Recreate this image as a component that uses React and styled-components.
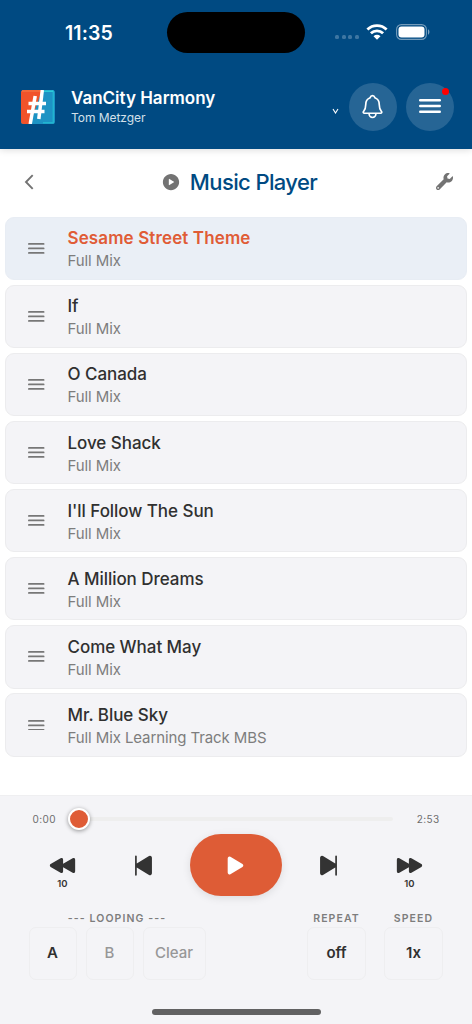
import React from 'react';
import styled, { createGlobalStyle } from 'styled-components';
import {
  IoNotificationsOutline,
  IoPlayCircle,
  IoPlayBack,
  IoPlayForward,
  IoPlaySkipBack,
  IoPlaySkipForward,
  IoPlay,
} from 'react-icons/io5';
import { FaWrench } from 'react-icons/fa';

const tracks = [
  { title: 'Sesame Street Theme', part: 'Full Mix' },
  { title: 'If', part: 'Full Mix' },
  { title: 'O Canada', part: 'Full Mix' },
  { title: 'Love Shack', part: 'Full Mix' },
  { title: "I'll Follow The Sun", part: 'Full Mix' },
  { title: 'A Million Dreams', part: 'Full Mix' },
  { title: 'Come What May', part: 'Full Mix' },
  { title: 'Mr. Blue Sky', part: 'Full Mix Learning Track MBS' },
];

const Bars = ({ width, gap, weight }) => (
  <svg width={width} height={gap * 2 + weight} fill="none" stroke="currentColor" strokeWidth={weight} strokeLinecap="round">
    {[0, 1, 2].map((i) => (
      <path key={i} d={`M${weight / 2} ${weight / 2 + gap * i}H${width - weight / 2}`} />
    ))}
  </svg>
);

const Wifi = () => (
  <svg width="22" height="16" viewBox="0 0 22 16" fill="none" stroke="#fff" strokeWidth="2.8">
    <path d="M1.4 5.6a13.8 13.8 0 0 1 19.2 0" />
    <path d="M4.9 9.3a8.8 8.8 0 0 1 12.2 0" />
    <path d="M7.5 12.2a5 5 0 0 1 7 0L11 15.7z" fill="#fff" stroke="none" />
  </svg>
);

const Battery = () => (
  <svg width="34" height="16" viewBox="0 0 34 16" fill="none">
    <rect x=".6" y=".6" width="29.8" height="14.8" rx="4.8" stroke="#fff" strokeOpacity=".45" strokeWidth="1.1" />
    <rect x="2.5" y="2.5" width="26" height="11" rx="3" fill="#fff" />
    <path d="M32 5.3c1.9.8 1.9 4.6 0 5.4z" fill="#fff" fillOpacity=".5" />
  </svg>
);

const Logo = () => (
  <svg width="34" height="34" viewBox="0 0 34 34">
    <rect width="34" height="34" rx="2.5" fill="#1d93c4" />
    <path d="M31 1.2h1.3v31.6H22" fill="none" stroke="#21b5cf" strokeWidth="1.4" />
    <path d="M21 1.2h11" stroke="#2ccbd8" strokeWidth="1.6" />
    <path d="M2.5 0H21L9 34H2.5A2.5 2.5 0 0 1 0 31.5v-29A2.5 2.5 0 0 1 2.5 0z" fill="#f1532a" />
    <path d="M1 1h18.5" stroke="#f47a45" strokeWidth="1.2" />
    <g fill="none" stroke="#fff" strokeWidth="3.5">
      <path d="M14.2 6L9.2 34" />
      <path d="M21.3 0L17.8 29" />
      <path d="M7.5 13.5H25M6 21.5H23.5" />
    </g>
  </svg>
);

function App() {
  return (
    <>
      <GlobalStyle />
      <Screen>
        <Header>
          <StatusBar>
            <Clock>11:35</Clock>
            <Island />
            <Status>
              <Signal><i /><i /><i /><i /></Signal>
              <Wifi />
              <Battery />
            </Status>
          </StatusBar>
          <Account>
            <Logo />
            <Names>
              <Group>VanCity Harmony</Group>
              <Member>Tom Metzger</Member>
            </Names>
            <Caret viewBox="0 0 7 6"><path d="M1 1l2.5 4L6 1" /></Caret>
            <RoundButton><IoNotificationsOutline size={27} /></RoundButton>
            <RoundButton>
              <Bars width={22} gap={5.8} weight={2.5} />
              <Badge />
            </RoundButton>
          </Account>
        </Header>

        <TitleBar>
          <svg width="10" height="16" viewBox="0 0 10 16" fill="none" stroke="currentColor" strokeWidth="1.9">
            <path d="M8.7 1.2L2 8l6.7 6.8" />
          </svg>
          <Title><IoPlayCircle size={20} /><h1>Music Player</h1></Title>
          <FaWrench size={17} />
        </TitleBar>

        <TrackList>
          {tracks.map((track, index) => (
            <Track key={track.title} $active={index === 0}>
              <Bars width={16.5} gap={4.5} weight={1.8} />
              <div>
                <TrackTitle $active={index === 0}>{track.title}</TrackTitle>
                <TrackPart>{track.part}</TrackPart>
              </div>
            </Track>
          ))}
        </TrackList>

        <Player>
          <Progress>
            <Time>0:00</Time>
            <Slider><Thumb /></Slider>
            <Time>2:53</Time>
          </Progress>
          <Controls>
            <Control><IoPlayBack size={27} /><small>10</small></Control>
            <Control><IoPlaySkipBack size={27} /></Control>
            <PlayButton><IoPlay size={25} /></PlayButton>
            <Control><IoPlaySkipForward size={27} /></Control>
            <Control><IoPlayForward size={27} /><small>10</small></Control>
          </Controls>
          <Options>
            <OptionGroup>
              <Label>--- LOOPING ---</Label>
              <Buttons>
                <OptionButton $width={48}>A</OptionButton>
                <OptionButton $width={48} $muted>B</OptionButton>
                <OptionButton $width={63} $muted>Clear</OptionButton>
              </Buttons>
            </OptionGroup>
            <Buttons $gap={18}>
              <OptionGroup>
                <Label>REPEAT</Label>
                <OptionButton $width={59}>off</OptionButton>
              </OptionGroup>
              <OptionGroup>
                <Label>SPEED</Label>
                <OptionButton $width={59}>1x</OptionButton>
              </OptionGroup>
            </Buttons>
          </Options>
          <HomeBar />
        </Player>
      </Screen>
    </>
  );
}

const GlobalStyle = createGlobalStyle`
  * {
    box-sizing: border-box;
  }
  body {
    margin: 0;
    background: #fff;
    font-family: Inter, "Liberation Sans", sans-serif;
  }
  h1 {
    margin: 0;
  }
  svg {
    display: block;
    flex: none;
  }
  button {
    font-family: inherit;
    padding: 0;
    border: 0;
  }
`;
const Screen = styled.main`
  display: flex;
  flex-direction: column;
  width: 472px;
  height: 1024px;
  overflow: hidden;
`;
const Header = styled.header`
  height: 148.5px;
  flex: none;
  background: #004a82;
  color: #fff;
  box-shadow: 0 1px 7px rgba(0, 0, 0, 0.14);
`;
const StatusBar = styled.div`
  display: grid;
  grid-template-columns: 167px 138px 1fr;
  align-items: center;
  height: 65px;
`;
const Clock = styled.div`
  padding-left: 65px;
  font-size: 19.5px;
  font-weight: 600;
  letter-spacing: 0.1px;
`;
const Island = styled.div`
  height: 40.5px;
  border-radius: 21px;
  background: #000;
`;
const Status = styled.div`
  display: flex;
  align-items: center;
  margin-top: -2px;
  padding-left: 30px;
  svg + svg {
    margin-left: 7.5px;
  }
`;
const Signal = styled.div`
  display: flex;
  gap: 2.5px;
  margin: 11px 7.5px 0 0;
  i {
    width: 4px;
    height: 4px;
    border-radius: 1.5px;
    background: #3d76a2;
  }
`;
const Account = styled.div`
  display: flex;
  align-items: center;
  height: 83px;
  padding: 0 18px 0 21px;
`;
const Names = styled.div`
  flex: 1;
  padding-left: 16px;
`;
const Group = styled.div`
  font-size: 17px;
  line-height: 22px;
  font-weight: 600;
`;
const Member = styled.div`
  font-size: 12px;
  line-height: 18px;
  letter-spacing: -0.05px;
  color: #d3e0ea;
`;
const Caret = styled.svg`
  width: 7px;
  height: 6px;
  margin: 8px 10px 0 0;
  fill: none;
  stroke: #fff;
  stroke-width: 1.1;
`;
const RoundButton = styled.button`
  position: relative;
  display: flex;
  align-items: center;
  justify-content: center;
  width: 48px;
  height: 48px;
  padding-right: 1px;
  border-radius: 50%;
  background: #266595;
  color: #fff;
  & + & {
    margin-left: 9px;
  }
`;
const Badge = styled.span`
  position: absolute;
  top: 5px;
  right: 5px;
  width: 7.5px;
  height: 7.5px;
  border-radius: 50%;
  background: #f00;
`;
const TitleBar = styled.div`
  display: flex;
  align-items: center;
  justify-content: space-between;
  height: 67.5px;
  padding: 0 19px 1px 24px;
  color: #737373;
`;
const Title = styled.div`
  display: flex;
  align-items: center;
  gap: 9px;
  padding-left: 8px;
  h1 {
    color: #004a82;
    font-size: 22px;
    line-height: 28px;
    font-weight: 500;
    letter-spacing: -0.62px;
  }
`;
const TrackList = styled.div`
  display: flex;
  flex-direction: column;
  gap: 4.6px;
  height: 579px;
  flex: none;
  padding: 0.5px 5px 0;
`;
const Track = styled.div`
  display: flex;
  align-items: center;
  gap: 23px;
  height: 63.5px;
  flex: none;
  padding-left: 22px;
  border: 1px solid ${(p) => (p.$active ? '#e8edf4' : '#ececee')};
  border-radius: 9px;
  background: ${(p) => (p.$active ? '#eaeff6' : '#f4f4f7')};
  color: #777;
`;
const TrackTitle = styled.div`
  padding-top: 3px;
  font-size: 17px;
  line-height: 23px;
  font-weight: ${(p) => (p.$active ? 600 : 500)};
  letter-spacing: ${(p) => (p.$active ? 0.12 : -0.05)}px;
  color: ${(p) => (p.$active ? '#e05c36' : '#303030')};
`;
const TrackPart = styled.div`
  font-size: 15px;
  line-height: 22px;
  letter-spacing: -0.1px;
  color: #7d7d7d;
`;
const Player = styled.section`
  display: flex;
  flex-direction: column;
  height: 229px;
  flex: none;
  border-top: 1px solid #efeff1;
  background: #f4f4f7;
`;
const Progress = styled.div`
  display: flex;
  align-items: center;
  justify-content: space-between;
  height: 38px;
  padding: 8.5px 32.5px 0;
`;
const Time = styled.span`
  font-size: 10px;
  letter-spacing: 0.4px;
  color: #6d6d6d;
`;
const Slider = styled.div`
  display: flex;
  align-items: center;
  width: 325px;
  height: 4px;
  margin-right: 12px;
  border-radius: 2px;
  background: #eee;
`;
const Thumb = styled.div`
  flex: none;
  width: 22px;
  height: 22px;
  border: 2px solid #fff;
  border-radius: 50%;
  background: #df5c36;
  box-shadow: 0 1px 4px rgba(0, 0, 0, 0.4);
`;
const Controls = styled.div`
  display: grid;
  grid-template-columns: 67px 94px 92px 93px 69px;
  padding-left: 29px;
  align-items: center;
  height: 62px;
`;
const Control = styled.button`
  position: relative;
  display: flex;
  align-items: center;
  justify-content: center;
  height: 62px;
  background: none;
  color: #333;
  small {
    position: absolute;
    top: 43px;
    font-size: 9.5px;
    line-height: 13px;
    font-weight: 600;
  }
`;
const PlayButton = styled.button`
  display: flex;
  align-items: center;
  justify-content: center;
  height: 62px;
  padding-right: 1px;
  border-radius: 31px;
  background: #de5c36;
  color: #fff;
  box-shadow: 0 2px 9px rgba(0, 0, 0, 0.1);
`;
const Options = styled.div`
  display: flex;
  justify-content: space-between;
  padding: 16px 29px 0 28.5px;
`;
const OptionGroup = styled.div`
  display: flex;
  flex-direction: column;
  align-items: center;
`;
const Label = styled.div`
  height: 15px;
  font-size: 10.5px;
  line-height: 14px;
  font-weight: 600;
  letter-spacing: 1.1px;
  color: #7d7d7d;
`;
const Buttons = styled.div`
  display: flex;
  gap: ${(p) => p.$gap || 9}px;
`;
const OptionButton = styled.button`
  width: ${(p) => p.$width}px;
  height: 52.5px;
  padding-bottom: 2px;
  border: 1px solid #eeeef0;
  border-radius: 7px;
  background: transparent;
  color: ${(p) => (p.$muted ? '#979797' : '#303030')};
  font-size: 15px;
  font-weight: ${(p) => (p.$muted ? 500 : 600)};
`;
const HomeBar = styled.div`
  width: 169px;
  height: 6px;
  margin: auto auto 9px 151.5px;
  border-radius: 3px;
  background: #616162;
`;

export default App;
